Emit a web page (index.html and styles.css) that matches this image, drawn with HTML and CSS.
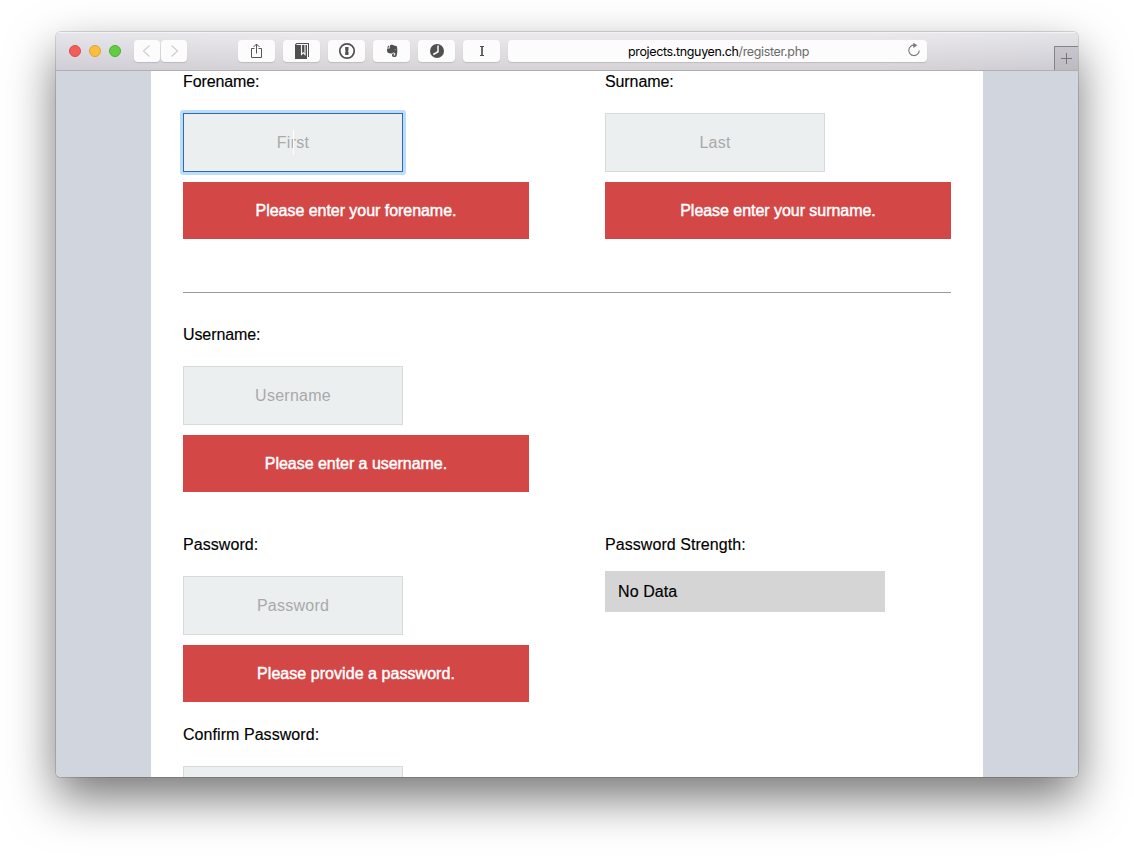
FILE: index.html
```html
<!DOCTYPE html>
<html lang="en">
<head>
<meta charset="utf-8">
<title>Register</title>
<link rel="stylesheet" href="styles.css">
</head>
<body>
<div class="window">
  <header class="toolbar">
    <div class="lights"><span class="light red"></span><span class="light yellow"></span><span class="light green"></span></div>
    <div class="nav">
      <button class="btn nav-btn" aria-label="Back"><svg width="26" height="22" viewBox="0 0 26 22"><path d="M15.5 5.5 9.5 11l6 5.5" fill="none" stroke="#cfcfcf" stroke-width="1.2"/></svg></button>
      <button class="btn nav-btn" aria-label="Forward"><svg width="26" height="22" viewBox="0 0 26 22"><path d="M10.5 5.5 16.5 11l-6 5.5" fill="none" stroke="#cfcfcf" stroke-width="1.2"/></svg></button>
    </div>
    <div class="tools">
      <button class="btn tool" aria-label="Share"><svg width="37" height="22" viewBox="0 0 37 22"><path d="M16.500 8.500h-3v9h10v-9h-3M18.500 13.500V4M15.500 7l3-3 3 3" fill="none" stroke="#555" stroke-width="1"/></svg></button>
      <button class="btn tool" aria-label="Bookmarks"><svg width="37" height="22" viewBox="0 0 37 22"><path d="M12 4.500 13.500 3H26v14h-1V4H14l-1 1h11v14H12z" fill="#505050"/><path d="M18.500 5v9.500l1.800-1.800 1.700 1.800V5" fill="none" stroke="#fbfbfb" stroke-width="1.100"/></svg></button>
      <button class="btn tool" aria-label="Password manager"><svg width="37" height="22" viewBox="0 0 37 22"><circle cx="19" cy="11" r="7.2" fill="none" stroke="#505050" stroke-width="1.7"/><path d="M17.200 7h3.300v3.300l-.6.700.6.700V15h-3.300v-3.300l.6-.7-.6-.7z" fill="#505050"/></svg></button>
      <button class="btn tool" aria-label="Clipper"><svg width="37" height="22" viewBox="0 0 37 22"><path d="M17 5.200c2-.8 3.300-.4 4 .3 1.500.3 2.800.4 3 1.200.5 3 .5 6.300-.3 8.800-.4 1.400-1.300 1.600-2.700 1.500-1.500-.1-2-.8-2-1.700 0-1.300.8-1.700 2.200-1.700v1.200c-.8 0-1 .7-.2.8 1.200.1 1.300-1 1.200-2.600-.9-.2-1.700-.2-2-.8-.3 1-1.200 1.300-2.400 1.200-2-.1-3.300-.5-3.600-2-.2-1-.3-1.900-.2-3H16.500z" fill="#505050"/><path d="M13.800 7.500 16 5.200v2.300z" fill="#505050"/><path d="M21.500 9.500q1-.7 1.400.4z" fill="#fff"/></svg></button>
      <button class="btn tool" aria-label="History"><svg width="37" height="22" viewBox="0 0 37 22"><circle cx="19" cy="11" r="7" fill="#505050"/><path d="M20 5.500v6.200l-4.700 2.800" fill="none" stroke="#fbfbfb" stroke-width="1.500"/></svg></button>
      <button class="btn tool" aria-label="Instapaper"><svg width="37" height="22" viewBox="0 0 37 22"><path d="M17 6.500h4M17 15.500h4" fill="none" stroke="#505050" stroke-width="1"/><path d="M19 6.500v9" stroke="#505050" stroke-width="1.700"/></svg></button>
      <div class="btn address"><span class="host">projects.tnguyen.ch</span><span class="path">/register.php</span>
        <svg class="reload" width="14" height="16" viewBox="0 0 14 16"><path d="M7.500 3.200A5.200 5.200 0 1 0 12.200 8.400" fill="none" stroke="#777" stroke-width="1.1"/><path d="M6.300.7 10.300 3.200 6.300 6z" fill="#777"/></svg>
      </div>
    </div>
    <button class="new-tab" aria-label="New tab"><svg width="24" height="24" viewBox="0 0 24 24"><path d="M11.500 6v11M6 11.500h11" stroke="#77757b" stroke-width="1" fill="none"/></svg></button>
  </header>
  <main class="viewport">
    <form class="page">
      <div class="row">
        <div class="field">
          <label class="label">Forename:</label>
          <div class="control"><input class="input focused" placeholder="First"><span class="caret"></span></div>
          <p class="error">Please enter your forename.</p>
        </div>
        <div class="field">
          <label class="label">Surname:</label>
          <input class="input" placeholder="Last">
          <p class="error">Please enter your surname.</p>
        </div>
      </div>
      <hr class="divider">
      <div class="row user-row">
        <div class="field">
          <label class="label">Username:</label>
          <input class="input" placeholder="Username">
          <p class="error">Please enter a username.</p>
        </div>
      </div>
      <div class="row pass-row">
        <div class="field">
          <label class="label label-wide">Password:</label>
          <input class="input" placeholder="Password">
          <p class="error error-wide">Please provide a password.</p>
        </div>
        <div class="field">
          <label class="label label-wide label-strength">Password Strength:</label>
          <div class="strength">No Data</div>
        </div>
      </div>
      <div class="row">
        <div class="field">
          <label class="label label-wide">Confirm Password:</label>
          <input class="input">
        </div>
      </div>
    </form>
  </main>
</div>
</body>
</html>
```
FILE: styles.css
```css
* { box-sizing: border-box; }
html, body { height: 100%; }
body {
  margin: 0;
  padding: 32px 56px 0;
  overflow: hidden;
  background: #fff;
  font: 16px/18px "Liberation Sans", Arial, sans-serif;
  letter-spacing: -0.1px;
  color: #000;
}
.window {
  width: 1022px;
  height: 745px;
  display: flex;
  flex-direction: column;
  border-radius: 5px;
  overflow: hidden;
  box-shadow: 0 0 0 1px rgba(0, 0, 0, .14), 0 21px 48px rgba(0, 0, 0, .54);
}
.toolbar {
  flex: none;
  height: 39px;
  display: flex;
  align-items: center;
  padding-left: 13px;
  border-bottom: 1px solid #b0aeb2;
  box-shadow: inset 0 1px #f3f3f4;
  background: linear-gradient(rgba(255, 255, 255, .28), rgba(90, 80, 90, .1)), linear-gradient(90deg, #dddce4, #e5e2e5 25%, #e5e2e5 80%, #dadae1);
}
.lights { display: flex; gap: 8px; }
.light { width: 12px; height: 12px; border-radius: 50%; border: 1px solid; }
.red { background: #f25e57; border-color: #da4d49; }
.yellow { background: #f9be3d; border-color: #dea236; }
.green { background: #62cd43; border-color: #4fae36; }
.nav { display: flex; gap: 1px; margin-left: 13px; }
.btn {
  height: 22px;
  padding: 0;
  border: 0;
  border-radius: 4px;
  background: #fcfcfc;
  box-shadow: 0 1px 1px rgba(0, 0, 0, .13);
}
.btn svg { display: block; }
.nav-btn { width: 26px; }
.tools { display: flex; gap: 8px; margin-left: 51px; }
.tool { width: 37px; }
.address {
  position: relative;
  width: 419px;
  display: flex;
  justify-content: center;
  padding-left: 2px;
  font: 12.5px/23px Inter, Roboto, sans-serif;
  letter-spacing: -0.36px;
}
.path { color: #6a6a6a; }
.address .reload { position: absolute; right: 6px; top: 2px; }
.new-tab {
  width: 24px;
  height: 24px;
  margin-left: auto;
  align-self: flex-end;
  padding: 0;
  border: solid #858389;
  border-width: 1px 0 0 1px;
  background: linear-gradient(#c8c6cd, #bdbbc0);
}
.new-tab svg { display: block; }
.viewport {
  flex: 1;
  overflow: hidden;
  background: #d1d5de;
}
.page {
  width: 832px;
  height: 706px;
  margin-left: 95px;
  padding: 2px 32px 0;
  overflow: hidden;
  background: #fff;
}
.row { display: flex; gap: 76px; }
.field { width: 346px; }
.label {
  display: block;
  height: 18px;
  margin-bottom: 22px;
  -webkit-text-stroke: .15px #000;
}
.label-wide { letter-spacing: .06px; }
.control { position: relative; width: 220px; }
.input {
  display: block;
  width: 220px;
  height: 59px;
  padding: 0;
  border: 1px solid #d5dadb;
  border-radius: 0;
  background: #ebeff0;
  font: 16px "Liberation Sans", Arial, sans-serif;
  letter-spacing: .25px;
  text-align: center;
  outline: none;
}
.input::placeholder { color: #a9a9a9; opacity: 1; }
.focused {
  border-color: #3068b2;
  box-shadow: 0 0 0 3px #bbddfc;
}
.control::before {
  content: "";
  position: absolute;
  inset: -3px;
  border-radius: 3px;
  background: #bbddfc;
}
.control .focused { position: relative; box-shadow: none; }
.caret {
  position: absolute;
  left: 110px;
  top: 17px;
  width: 1px;
  height: 25px;
  background: #fff;
}
.error {
  height: 57px;
  margin: 10px 0 0;
  background: #d44747;
  color: #fff;
  letter-spacing: -.04px;
  line-height: 57px;
  text-align: center;
  -webkit-text-stroke: .45px #fff;
}
.error-wide { letter-spacing: .05px; }
.divider {
  height: 1px;
  margin: 53px 0 33px;
  border: 0;
  background: #999;
}
.user-row { margin-bottom: 44px; }
.pass-row { margin-bottom: 24px; }
.label-strength { margin-bottom: 17px; }
.strength {
  width: 280px;
  height: 41px;
  padding-left: 13px;
  background: #d5d5d5;
  line-height: 41px;
  letter-spacing: .08px;
  -webkit-text-stroke: .15px #000;
}
```
